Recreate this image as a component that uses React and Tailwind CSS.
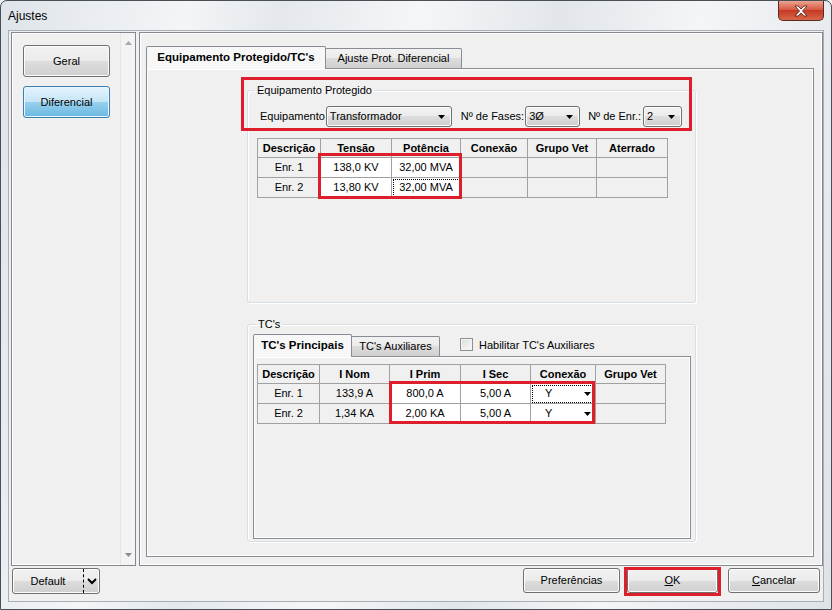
import React from "react";

const font = { fontFamily: '"Liberation Sans", Arial, sans-serif' };

const btn =
  "border border-[#707070] rounded-[3px] bg-[linear-gradient(#f2f2f2,#ebebeb_50%,#dddddd_50%,#cfcfcf)] shadow-[inset_0_0_0_1px_#fcfcfc] flex items-center justify-center text-[11px] text-black";

function Arrow({ className = "" }) {
  return (
    <svg width="7" height="4" viewBox="0 0 7 4" className={className}>
      <path d="M0 0h7L3.5 4z" fill="#000" />
    </svg>
  );
}

function Combo({ value, w }) {
  return (
    <div
      className="flex-none h-[21px] border border-[#707070] rounded-[3px] bg-[linear-gradient(#f2f2f2,#ebebeb_50%,#dddddd_50%,#cfcfcf)] shadow-[inset_0_0_0_1px_#fcfcfc] flex items-center pl-[3px] pr-[6px] text-[11px]"
      style={{ width: w }}
    >
      <span className="flex-1">{value}</span>
      <Arrow />
    </div>
  );
}

function Grid({ cols, head, rows }) {
  return (
    <table className="border-collapse text-[11px] table-fixed">
      <colgroup>
        {cols.map((c, i) => (
          <col key={i} style={{ width: c }} />
        ))}
      </colgroup>
      <thead>
        <tr className="h-[19px]">
          {head.map((h) => (
            <th key={h} className="border border-[#a0a0a0] bg-[#f0f0f0] font-bold p-0 text-center">
              {h}
            </th>
          ))}
        </tr>
      </thead>
      <tbody>
        {rows.map((r, ri) => (
          <tr key={ri} className="h-[20px]">
            {r.map((c, ci) => (
              <td
                key={ci}
                className={
                  "border border-[#a0a0a0] p-0 text-center " +
                  (c.white ? "bg-white " : "bg-[#f0f0f0] ") +
                  (c.focus ? "outline-1 outline-dotted outline-black -outline-offset-2 " : "")
                }
              >
                {c.combo ? (
                  <div className="flex items-center pl-[14px] pr-[4px]">
                    <span className="flex-1 text-left">{c.t}</span>
                    <Arrow />
                  </div>
                ) : (
                  c.t
                )}
              </td>
            ))}
          </tr>
        ))}
      </tbody>
    </table>
  );
}

function Tab({ label, active, w }) {
  return active ? (
    <div
      className="h-[23px] border border-[#898c95] border-b-0 rounded-t-[2px] bg-[#f7f7f7] flex items-center justify-center font-bold text-[11.5px] relative z-10 -mb-px"
      style={{ width: w }}
    >
      {label}
    </div>
  ) : (
    <div
      className="h-[20px] mt-[2px] border border-[#898c95] border-l-0 border-b-0 rounded-tr-[2px] bg-[linear-gradient(#f2f2f2,#ebebeb_50%,#dddddd_50%,#cfcfcf)] flex items-center justify-center text-[11px]"
      style={{ width: w }}
    >
      {label}
    </div>
  );
}

const redBox = "absolute border-[3px] border-[#dc1f2b] pointer-events-none";

export default function App() {
  const g = (t, o = {}) => ({ t, ...o });
  return (
    <div className="w-[832px] h-[610px] relative overflow-hidden bg-[#f0f0f0] text-black" style={font}>
      <div className="absolute inset-0 rounded-t-[7px] border border-[#4a4f55] bg-[linear-gradient(100deg,#dfe4ea_0%,#f3f5f7_20%,#e4e8ec_30%,#f5f6f8_45%,#e2e6ea_60%,#f4f5f7_75%,#dfe3e8_100%)]">
        {/* title bar */}
        <div className="h-[29px] flex items-center pl-[7px] text-[12px]">Ajustes</div>
        <div className="absolute left-[777px] top-0 w-[46px] h-[20px] rounded-b-[5px] border border-[#5b2b22] border-t-0 bg-[linear-gradient(#eba493,#d75b44_45%,#c43a22_50%,#d7664b)] flex items-center justify-center">
          <svg width="14" height="12" viewBox="0 0 14 12">
            <path
              d="M1 1h3l3 3 3-3h3l-4.5 5L13 11h-3L7 8l-3 3H1l4.5-5z"
              fill="#fff"
              stroke="#4a1a12"
              strokeWidth="0.8"
            />
          </svg>
        </div>

        {/* client area */}
        <div className="ml-[7px] w-[816px] h-[572px] bg-[#f0f0f0] border border-[#a6aeb8] flex flex-col">
          <div className="flex pl-[2px] pt-[1px] gap-[3px] h-[535px]">
            {/* left list */}
            <div className="w-[125px] h-[534px] border border-[#828790] shadow-[inset_0_0_0_1px_#ffffff] flex">
              <div className="flex-1 flex flex-col items-start pt-[12px] gap-[9px] pl-[11px]">
                <div className={btn + " w-[87px] h-[32px]"}>Geral</div>
                <div className="w-[87px] h-[32px] border border-[#3c7fb1] rounded-[3px] bg-[linear-gradient(#e5f4fc,#c4e5f6_50%,#98d1ef_50%,#6ab8e0)] shadow-[inset_0_0_0_1px_#e8f6fd] flex items-center justify-center text-[11px]">
                  Diferencial
                </div>
              </div>
              <div className="w-[15px] border-l border-[#e6e6e6] bg-[#f3f3f3] flex flex-col justify-between items-center py-[8px]">
                <svg width="7" height="4" viewBox="0 0 7 4">
                  <path d="M0 4h7L3.5 0z" fill="#a8a8a8" />
                </svg>
                <svg width="7" height="4" viewBox="0 0 7 4">
                  <path d="M0 0h7L3.5 4z" fill="#8a8a8a" />
                </svg>
              </div>
            </div>

            {/* right panel */}
            <div className="w-[684px] h-[534px] border border-[#828790] shadow-[inset_0_0_0_1px_#ffffff] pl-[6px] pt-[13px]">
              <div className="flex items-end">
                <Tab label="Equipamento Protegido/TC's" active w={180} />
                <Tab label="Ajuste Prot. Diferencial" w={136} />
              </div>
              <div className="w-[668px] h-[489px] border border-[#898c95] bg-[#f0f0f0] shadow-[inset_0_0_0_1px_#ffffff] pl-[100px] pt-[14px]">
                {/* group 1 */}
                <fieldset className="min-w-0 w-[449px] h-[220px] border border-[#d5dfe5] rounded-[3px] shadow-[inset_1px_1px_0_#ffffff,1px_1px_0_#ffffff] px-[9px]">
                  <legend className="ml-[-2px] px-[2px] text-[11px] leading-[14px]">Equipamento Protegido</legend>
                  <div className="flex items-center mt-[9px] text-[11px] h-[21px] whitespace-nowrap">
                    <span className="ml-[3px] mr-[1px]">Equipamento</span>
                    <Combo value="Transformador" w={126} />
                    <span className="ml-[9px] mr-[1px]">Nº de Fases:</span>
                    <Combo value="3Ø" w={55} />
                    <span className="ml-[8px] mr-[2px]">Nº de Enr.:</span>
                    <Combo value="2" w={39} />
                  </div>
                  <div className="mt-[11px]">
                    <Grid
                      cols={[63, 71, 69, 67, 69, 71]}
                      head={["Descrição", "Tensão", "Potência", "Conexão", "Grupo Vet", "Aterrado"]}
                      rows={[
                        [g("Enr. 1"), g("138,0 KV", { white: 1 }), g("32,00 MVA", { white: 1 }), g(""), g(""), g("")],
                        [g("Enr. 2"), g("13,80 KV", { white: 1 }), g("32,00 MVA", { white: 1, focus: 1 }), g(""), g(""), g("")],
                      ]}
                    />
                  </div>
                </fieldset>

                {/* group 2 */}
                <fieldset className="min-w-0 mt-[14px] w-[449px] h-[225px] border border-[#d5dfe5] rounded-[3px] shadow-[inset_1px_1px_0_#ffffff,1px_1px_0_#ffffff] px-[5px]">
                  <legend className="ml-[3px] px-[2px] text-[11px] leading-[14px]">TC's</legend>
                  <div className="flex items-end mt-[3px]">
                    <Tab label="TC's Principais" active w={99} />
                    <Tab label="TC's Auxiliares" w={88} />
                    <div className="flex items-center ml-[20px] mb-[3px] text-[11px]">
                      <div className="w-[13px] h-[13px] border border-[#8e8f8f] bg-[linear-gradient(135deg,#dcdcdc,#fbfbfb)] shadow-[inset_0_0_0_1px_#f4f4f4] mr-[6px]" />
                      Habilitar TC's Auxiliares
                    </div>
                  </div>
                  <div className="w-[438px] h-[183px] border border-[#898c95] bg-[#f0f0f0] shadow-[inset_0_0_0_1px_#ffffff] pl-[3px] pt-[7px]">
                    <Grid
                      cols={[62, 70, 71, 70, 65, 70]}
                      head={["Descrição", "I Nom", "I Prim", "I Sec", "Conexão", "Grupo Vet"]}
                      rows={[
                        [g("Enr. 1"), g("133,9 A"), g("800,0 A", { white: 1 }), g("5,00 A", { white: 1 }), g("Y", { white: 1, combo: 1, focus: 1 }), g("")],
                        [g("Enr. 2"), g("1,34 KA"), g("2,00 KA", { white: 1 }), g("5,00 A", { white: 1 }), g("Y", { white: 1, combo: 1 }), g("")],
                      ]}
                    />
                  </div>
                </fieldset>
              </div>
            </div>
          </div>

          {/* bottom buttons */}
          <div className="flex items-start h-[35px] pl-[3px] pr-[3px] pt-[2px]">
            <div className={btn + " w-[88px] h-[26px] justify-start"}>
              <span className="w-[70px] text-center">Default</span>
              <span className="h-[24px] border-l border-dashed border-black" />
              <svg width="14" height="10" viewBox="0 0 14 10" className="ml-[1px]">
                <path d="M3 3l4 4 4-4" fill="none" stroke="#000" strokeWidth="2" />
              </svg>
            </div>
            <div className="flex-1" />
            <div className={btn + " w-[97px] h-[25px] mr-[7px]"}>Preferências</div>
            <div className={btn + " w-[91px] h-[25px] mr-[10px]"}>
              <span className="underline">O</span>K
            </div>
            <div className={btn + " w-[92px] h-[25px]"}>
              <span className="underline">C</span>ancelar
            </div>
          </div>
        </div>
      </div>

      {/* red annotation boxes */}
      <div className={redBox + " left-[241px] top-[77px] w-[451px] h-[54px]"} />
      <div className={redBox + " left-[318px] top-[153px] w-[144px] h-[46px]"} />
      <div className={redBox + " left-[389px] top-[381px] w-[206px] h-[43px]"} />
      <div className={redBox + " left-[624px] top-[567px] w-[97px] h-[29px]"} />
    </div>
  );
}
